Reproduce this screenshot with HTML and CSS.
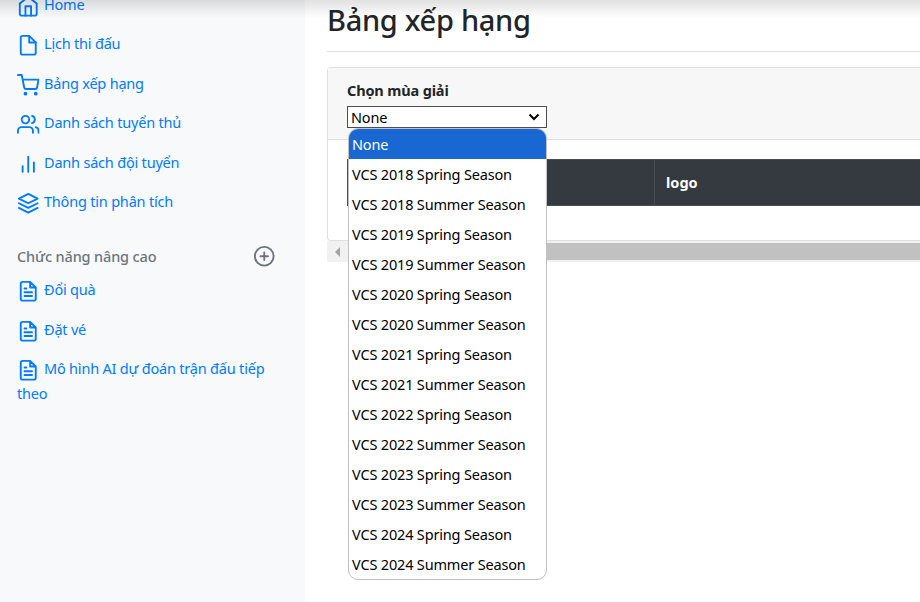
FILE: index.html
```
<!DOCTYPE html>
<html lang="vi">
<head>
<meta charset="utf-8">
<title>Bảng xếp hạng</title>
<link rel="stylesheet" href="styles.css">
</head>
<body>
<svg class="sprite" aria-hidden="true">
  <symbol id="home" viewBox="0 0 24 24"><path d="M3 9l9-7 9 7v11a2 2 0 0 1-2 2H5a2 2 0 0 1-2-2z"/><path d="M9 22V12h6v10"/></symbol>
  <symbol id="file" viewBox="0 0 24 24"><path d="M13 2H6a2 2 0 0 0-2 2v16a2 2 0 0 0 2 2h12a2 2 0 0 0 2-2V9z"/><path d="M13 2v7h7"/></symbol>
  <symbol id="cart" viewBox="0 0 24 24"><circle cx="9" cy="21" r="1"/><circle cx="20" cy="21" r="1"/><path d="M1 1h4l2.68 13.39a2 2 0 0 0 2 1.61h9.72a2 2 0 0 0 2-1.61L23 6H6"/></symbol>
  <symbol id="users" viewBox="0 0 24 24"><path d="M17 21v-2a4 4 0 0 0-4-4H5a4 4 0 0 0-4 4v2"/><circle cx="9" cy="7" r="4"/><path d="M23 21v-2a4 4 0 0 0-3-3.87M16 3.13a4 4 0 0 1 0 7.75"/></symbol>
  <symbol id="bars" viewBox="0 0 24 24"><path d="M18 20V10M12 20V4M6 20v-6"/></symbol>
  <symbol id="layers" viewBox="0 0 24 24"><path d="M12 2L2 7l10 5 10-5-10-5zM2 17l10 5 10-5M2 12l10 5 10-5"/></symbol>
  <symbol id="text" viewBox="0 0 24 24"><path d="M14 2H6a2 2 0 0 0-2 2v16a2 2 0 0 0 2 2h12a2 2 0 0 0 2-2V8zM14 2v6h6M16 13H8M16 17H8M10 9H8"/></symbol>
  <symbol id="plus" viewBox="0 0 24 24"><circle cx="12" cy="12" r="10"/><path d="M12 8v8M8 12h8"/></symbol>
</svg>
<div class="layout">
  <nav class="sidebar">
    <a class="link"><svg class="icon"><use href="#home"/></svg><span>Home</span></a>
    <a class="link"><svg class="icon"><use href="#file"/></svg><span>Lịch thi đấu</span></a>
    <a class="link"><svg class="icon"><use href="#cart"/></svg><span>Bảng xếp hạng</span></a>
    <a class="link"><svg class="icon"><use href="#users"/></svg><span>Danh sách tuyển thủ</span></a>
    <a class="link"><svg class="icon"><use href="#bars"/></svg><span>Danh sách đội tuyển</span></a>
    <a class="link"><svg class="icon"><use href="#layers"/></svg><span>Thông tin phân tích</span></a>
    <h6 class="heading"><span>Chức năng nâng cao</span><svg class="icon"><use href="#plus"/></svg></h6>
    <a class="link"><svg class="icon"><use href="#text"/></svg><span>Đổi quà</span></a>
    <a class="link"><svg class="icon"><use href="#text"/></svg><span>Đặt vé</span></a>
    <a class="link wrap"><svg class="icon"><use href="#text"/></svg><span>Mô hình AI dự đoán trận đấu tiếp<br>theo</span></a>
  </nav>
  <main class="main">
    <h1 class="title"><span>Bảng xếp hạng</span></h1>
    <section class="card">
      <div class="card-head">
        <label class="label"><span>Chọn mùa giải</span></label>
        <div class="select"><span>None</span><svg class="chevron" viewBox="0 0 12 8"><path d="M1.500 1.500L6 6l4.500-4.500"/></svg>
          <ul class="menu">
            <li class="active">None</li>
            <li>VCS 2018 Spring Season</li>
            <li>VCS 2018 Summer Season</li>
            <li>VCS 2019 Spring Season</li>
            <li>VCS 2019 Summer Season</li>
            <li>VCS 2020 Spring Season</li>
            <li>VCS 2020 Summer Season</li>
            <li>VCS 2021 Spring Season</li>
            <li>VCS 2021 Summer Season</li>
            <li>VCS 2022 Spring Season</li>
            <li>VCS 2022 Summer Season</li>
            <li>VCS 2023 Spring Season</li>
            <li>VCS 2023 Summer Season</li>
            <li>VCS 2024 Spring Season</li>
            <li>VCS 2024 Summer Season</li>
          </ul>
        </div>
      </div>
      <div class="card-body">
        <div class="table-head"><div class="cell first"></div><div class="cell">logo</div></div>
      </div>
    </section>
    <div class="scrollbar"><svg class="arrow" viewBox="0 0 5 10"><path d="M5 0v10L0 5z"/></svg><div class="thumb"></div></div>
  </main>
</div>
<div class="top-shadow"></div>
</body>
</html>
```
FILE: styles.css
```
* { box-sizing: border-box; }
body {
  margin: 0;
  height: 602px;
  overflow: hidden;
  background: #fff;
  color: #212529;
  font-family: "Noto Sans", "Open Sans", sans-serif;
  font-size: 15px;
  line-height: 24px;
}
.sprite { display: none; }
.layout { display: flex; height: 602px; }
.sidebar {
  flex: 0 0 305px;
  padding-left: 17px;
  background: #f8f9fb;
}
.link {
  display: block;
  height: 39.5px;
  color: #007bff;
  font-size: 14.5px;
  letter-spacing: -0.2px;
  line-height: 25px;
  white-space: nowrap;
}
.link:first-child { margin-top: -8.200px; }
.icon {
  width: 22.500px;
  height: 22.500px;
  margin: 0 4.500px 0 0;
  vertical-align: -3.500px;
  fill: none;
  stroke: currentColor;
  stroke-width: 2;
  stroke-linecap: round;
  stroke-linejoin: round;
}
.link .icon { margin-top: -4px; margin-bottom: -4px; }
.wrap { height: 50px; }
.heading {
  display: flex;
  justify-content: space-between;
  align-items: center;
  height: 24px;
  margin: 15.200px 29.500px 9px 0;
  color: #6c757d;
  font-size: 14.5px;
  font-weight: 500;
  letter-spacing: -0.15px;
}
.heading .icon { margin: 0; }
.main { flex: 1; min-width: 0; padding-left: 22px; }
.title {
  height: 52px;
  margin: 0 0 15px;
  border-bottom: 1px solid #dee2e6;
  font-size: 29px;
  font-weight: 500;
  letter-spacing: -0.3px;
  line-height: 40px;
}
.card {
  height: 174px;
  border: 1px solid #dfdfdf;
  border-right: 0;
  border-radius: 4px 0 0 4px;
}
.card-head {
  height: 72px;
  padding: 10px 0 0 19px;
  border-bottom: 1px solid #dfdfdf;
  background: #f7f7f7;
}
.label {
  display: block;
  height: 28px;
  font-size: 14.5px;
  font-weight: 700;
  letter-spacing: -0.15px;
}
.select {
  position: relative;
  display: flex;
  justify-content: space-between;
  align-items: center;
  width: 200px;
  height: 22px;
  padding: 0 6px 0 3px;
  border: 1px solid #4d4d4d;
  background: #fff;
  color: #000;
  font-size: 14.5px;
  letter-spacing: -0.17px;
}
.chevron { width: 12px; height: 8px; fill: none; stroke: #000; stroke-width: 2; }
.menu {
  position: absolute;
  top: 21px;
  left: 0;
  z-index: 2;
  width: 199px;
  height: 452px;
  margin: 0;
  padding: 0;
  overflow: hidden;
  border: 1px solid #c0c0c0;
  border-radius: 10px;
  background: #fff;
  list-style: none;
}
.menu li { height: 30px; padding-left: 3px; line-height: 31px; white-space: nowrap; }
.menu .active { background: #1967d2; color: #fff; }
.card-body { padding: 19px 0 0 19px; }
.table-head {
  display: flex;
  height: 47px;
  border: 1px solid #454d55;
  border-right: 0;
  background: #343a40;
  color: #fff;
  font-weight: 700;
}
.cell { padding: 10px 11px; font-size: 14.5px; }
.first { width: 307px; border-right: 1px solid #454d55; }
.scrollbar { display: flex; align-items: center; height: 21px; background: #f1f1f1; }
.arrow { width: 5px; height: 10px; margin: 0 8px; fill: #a3a3a3; }
.thumb { flex: 1; height: 17px; background: #c1c1c1; }
.top-shadow {
  position: absolute;
  inset: 0 0 auto;
  height: 18px;
  background: linear-gradient(rgba(0, 0, 0, .12), transparent);
}
```
